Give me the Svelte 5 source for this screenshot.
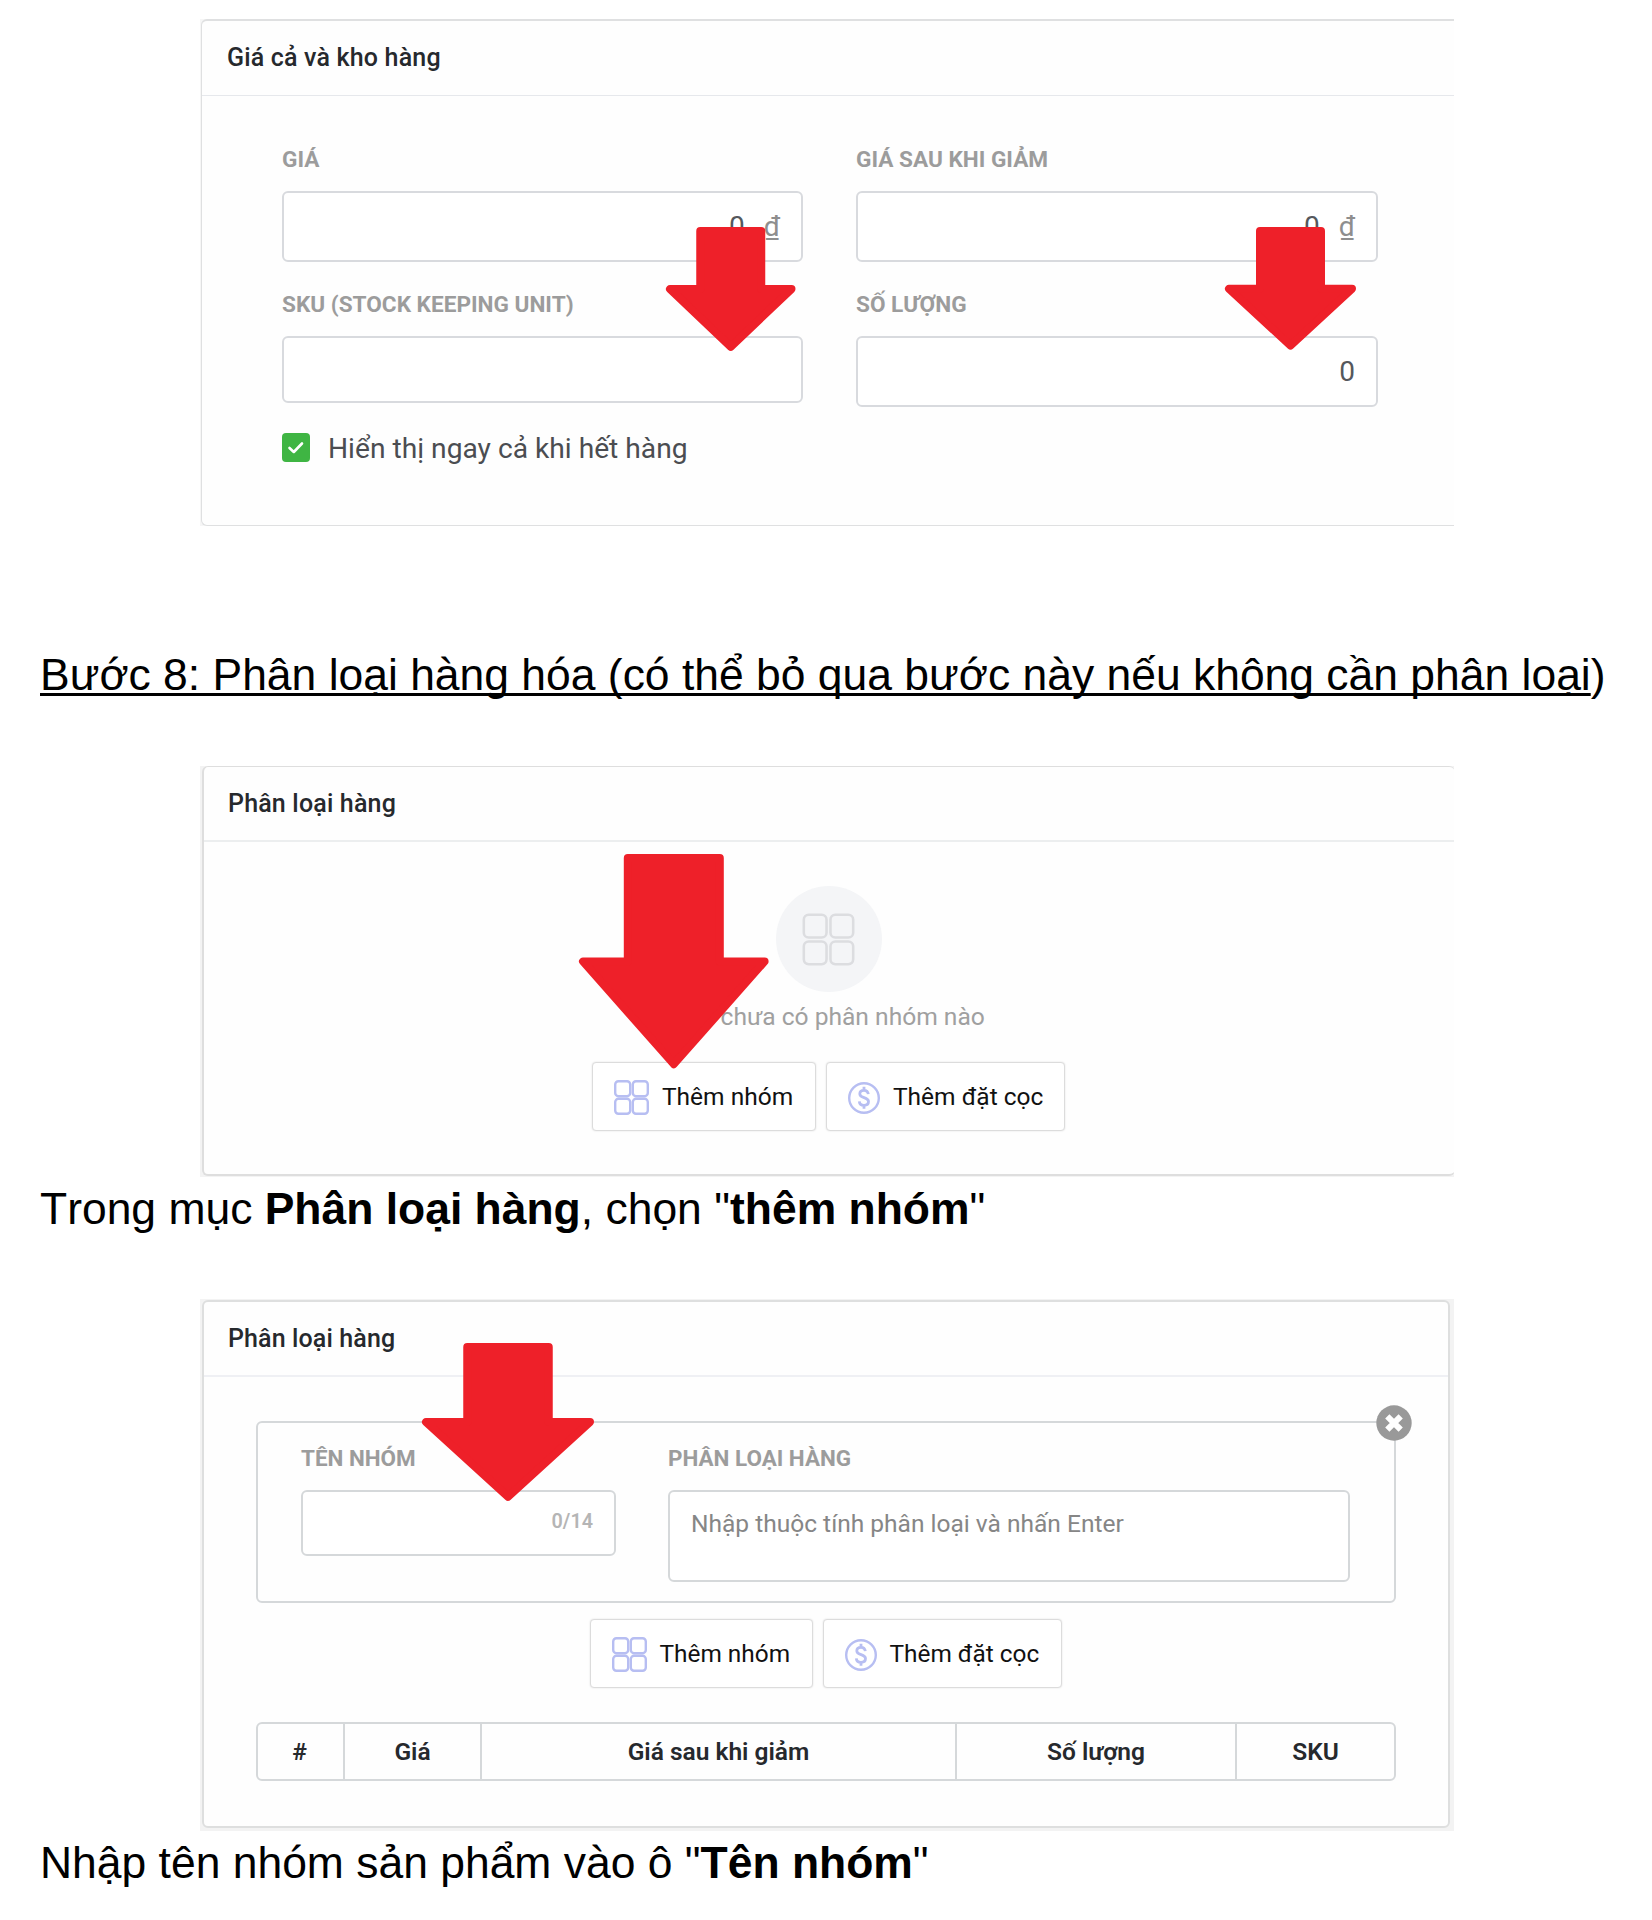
<script>
  // Arrow outlines: box size, shaft width and the depth at which the head begins.
  const arrows = {
    sku: { w: 129.5, h: 123.8, shaft: 69, head: 58 },
    quantity: { w: 131, h: 122.6, shaft: 69, head: 57.8 },
    addGroup: { w: 189.6, h: 214.2, shaft: 100, head: 103.4 },
    groupName: { w: 172, h: 157.8, shaft: 89.5, head: 75 }
  };

  const columns = ['#', 'Giá', 'Giá sau khi giảm', 'Số lượng', 'SKU'];

  // The stroke rounds the corners, so the polygon is inset by its radius.
  function arrowPoints({ w, h, shaft, head }) {
    const r = 4;
    const left = (w - shaft) / 2 + r;
    const right = (w + shaft) / 2 - r;
    return [
      [left, r], [right, r], [right, head + r], [w - r, head + r],
      [w / 2, h - r], [r, head + r], [left, head + r]
    ].map((p) => p.join(',')).join(' ');
  }
</script>

{#snippet arrow(name)}
  <svg class="arrow arrow-{name}" width={arrows[name].w} height={arrows[name].h} aria-hidden="true">
    <polygon points={arrowPoints(arrows[name])} />
  </svg>
{/snippet}

{#snippet gridIcon(kind)}
  <svg class="grid-icon {kind}" viewBox="0 0 35 35" aria-hidden="true">
    <rect x="1.2" y="1.2" width="15" height="15" rx="3.2" />
    <rect x="18.8" y="1.2" width="15" height="15" rx="3.2" />
    <rect x="1.2" y="18.8" width="15" height="15" rx="3.2" />
    <rect x="18.8" y="18.8" width="15" height="15" rx="3.2" />
  </svg>
{/snippet}

{#snippet actions()}
  <div class="actions">
    <button class="action group">
      {@render gridIcon('small')}
      <span>Thêm nhóm</span>
    </button>
    <button class="action deposit">
      <svg class="coin" viewBox="0 0 32 32" aria-hidden="true">
        <circle cx="16" cy="16" r="14.800" />
        <path d="M20.3 12.2C20 9.7 18.300 8.300 16 8.300C13.500 8.300 11.800 9.800 11.800 11.900C11.800 16.600 20.500 14.600 20.500 19.500C20.500 21.900 18.600 23.300 16 23.300C13.300 23.300 11.500 21.800 11.300 19.300M16 4.800V8.300M16 23.300V26.800" />
      </svg>
      <span>Thêm đặt cọc</span>
    </button>
  </div>
{/snippet}

<main>
  <section class="shot pricing">
    <div class="card">
      <h2>Giá cả và kho hàng</h2>
      <div class="fields">
        <div class="field">
          <span class="label">GIÁ</span>
          <div class="input money"><span>0</span><span class="unit">₫</span></div>
        </div>
        <div class="field">
          <span class="label">GIÁ SAU KHI GIẢM</span>
          <div class="input money"><span>0</span><span class="unit">₫</span></div>
        </div>
        <div class="field">
          <span class="label">SKU (STOCK KEEPING UNIT)</span>
          <div class="input short"></div>
        </div>
        <div class="field">
          <span class="label">SỐ LƯỢNG</span>
          <div class="input"><span>0</span></div>
        </div>
      </div>
      <div class="check-row">
        <svg width="28" height="29" viewBox="0 0 28 29" aria-hidden="true">
          <rect width="28" height="29" rx="4" fill="#3fb543" />
          <path d="M7.500 15L11.800 19L20 10.500" fill="none" stroke="#fff" stroke-width="2.600" stroke-linecap="round" stroke-linejoin="round" />
        </svg>
        <span>Hiển thị ngay cả khi hết hàng</span>
      </div>
    </div>
    {@render arrow('sku')}
    {@render arrow('quantity')}
  </section>

  <p class="step"><u>Bước 8: Phân loại hàng hóa (có thể bỏ qua bước này nếu không cần phân loại</u>)</p>

  <section class="shot empty">
    <div class="card">
      <h2>Phân loại hàng</h2>
      <div class="empty-state">
        <div class="disc">{@render gridIcon('large')}</div>
        <span class="hint">Bạn chưa có phân nhóm nào</span>
        {@render actions()}
      </div>
    </div>
    {@render arrow('addGroup')}
  </section>

  <p class="note">Trong mục <b>Phân loại hàng</b>, chọn "<b>thêm nhóm</b>"</p>

  <section class="shot form">
    <div class="card">
      <h2>Phân loại hàng</h2>
      <div class="form-body">
        <div class="panel">
          <div class="field name">
            <span class="label">TÊN NHÓM</span>
            <div class="input counter"><span>0/14</span></div>
          </div>
          <div class="field values">
            <span class="label">PHÂN LOẠI HÀNG</span>
            <div class="input area">Nhập thuộc tính phân loại và nhấn Enter</div>
          </div>
          <svg class="close" viewBox="0 0 36 36" aria-hidden="true">
            <circle cx="18" cy="18" r="17.700" />
            <path d="M11.300 11.300L24.700 24.700M24.700 11.300L11.300 24.700" />
          </svg>
        </div>
        {@render actions()}
        <div class="table">
          {#each columns as column}
            <div class="cell">{column}</div>
          {/each}
        </div>
      </div>
    </div>
    {@render arrow('groupName')}
  </section>

  <p class="note last">Nhập tên nhóm sản phẩm vào ô "<b>Tên nhóm</b>"</p>
</main>

<style>
  :global(body) {
    background: #fff;
  }

  main {
    box-sizing: border-box;
    width: 1652px;
    height: 1920px;
    padding-top: 19px;
    overflow: hidden;
    font-family: Roboto, sans-serif;
    color: #26292d;
  }

  main :global(*) {
    box-sizing: border-box;
  }

  .shot {
    position: relative;
    width: 1254px;
    margin-left: 200px;
  }

  .card {
    display: flex;
    flex-direction: column;
    height: 100%;
    background: #fefefe;
  }

  h2 {
    display: flex;
    align-items: center;
    flex: none;
    margin: 0;
    padding: 0 0 2px 24px;
    font-size: 25px;
    font-weight: 500;
    letter-spacing: 0.18px;
  }

  /* Pricing card */
  .pricing {
    height: 507px;
    overflow: hidden;
    background: #f6f6f6;
  }

  .pricing .card {
    width: 1270px;
    margin-left: 1px;
    border: solid #dfe0e1;
    border-width: 2px 0 1px 1px;
    border-radius: 6px;
  }

  .pricing h2 {
    height: 75px;
    padding-left: 25px;
    border-bottom: 1px solid #e6e8ec;
  }

  .fields {
    display: grid;
    grid-template-columns: 521px 522px;
    column-gap: 53px;
    row-gap: 30px;
    padding: 51px 0 0 80px;
  }

  .field {
    display: flex;
    flex-direction: column;
  }

  .label {
    height: 26px;
    margin-bottom: 18px;
    font-size: 22.600px;
    font-weight: 700;
    line-height: 26px;
    color: #9c9c9c;
    white-space: nowrap;
  }

  .input {
    display: flex;
    align-items: center;
    justify-content: flex-end;
    height: 71px;
    padding-right: 21px;
    border: 2px solid #d8dade;
    border-radius: 6px;
    font-size: 28px;
    color: #55585c;
    background: #fff;
  }

  .short {
    height: 67px;
  }

  .money {
    gap: 19px;
  }

  .unit {
    color: #8e8e8e;
  }

  .check-row {
    display: flex;
    align-items: center;
    gap: 18px;
    height: 30px;
    margin: 26px 0 0 80px;
    font-size: 28.200px;
    color: #4b4d51;
  }

  .check-row svg {
    margin-bottom: 1px;
  }

  /* Document text */
  p {
    height: 60px;
    margin: 0 0 0 40px;
    font-family: 'Liberation Sans', Arial, sans-serif;
    font-size: 44.450px;
    font-kerning: none;
    line-height: 60px;
    color: #000;
    white-space: nowrap;
  }

  .step {
    margin-top: 119px;
    margin-bottom: 61px;
  }

  .step u {
    text-decoration-thickness: 3px;
    text-underline-offset: 3px;
    text-decoration-skip-ink: none;
  }

  .note {
    margin-top: 2px;
    margin-bottom: 60px;
  }

  .last {
    margin-top: 2px;
    margin-bottom: 0;
  }

  /* Empty classification card */
  .empty {
    height: 411px;
    overflow: hidden;
    background: #f3f3f3;
  }

  .empty .card {
    width: 1253px;
    height: 410px;
    margin-left: 2px;
    border: solid #dedede;
    border-width: 1px 0 2px 2px;
    border-radius: 6px;
  }

  .empty h2 {
    height: 75px;
    padding-bottom: 1px;
    border-bottom: 2px solid #eceeef;
  }

  .empty-state {
    display: flex;
    flex-direction: column;
    align-items: center;
    padding: 44px 2px 0 0;
  }

  .disc {
    display: grid;
    place-items: center;
    width: 106px;
    height: 106px;
    border-radius: 50%;
    background: #f4f5f7;
  }

  .hint {
    height: 30px;
    margin: 10px 0 30px;
    font-size: 24.600px;
    line-height: 30px;
    color: #a0a0a0;
  }

  .grid-icon {
    fill: none;
    stroke: #b7bef2;
    stroke-width: 2.400;
  }

  .small {
    width: 35px;
    height: 35px;
  }

  .large {
    width: 53px;
    height: 53px;
    stroke: #dcdde0;
    stroke-width: 1.700;
  }

  .actions {
    display: flex;
    justify-content: center;
    gap: 10px;
  }

  .action {
    display: flex;
    align-items: center;
    gap: 13px;
    height: 69px;
    padding: 0 0 0 21px;
    border: 1px solid #dcdcdc;
    border-radius: 4px;
    background: #fff;
    box-shadow: 0 0 2px rgba(0, 0, 0, 0.12);
    font-family: inherit;
    font-size: 24.500px;
    color: #111;
    white-space: nowrap;
  }

  .action svg {
    margin-top: 2px;
  }

  .group {
    width: 224px;
  }

  .deposit {
    width: 239px;
  }

  .coin {
    width: 32px;
    height: 32px;
    fill: none;
    stroke: #b7bef2;
    stroke-width: 2.400;
  }

  .coin path {
    stroke-width: 2.800;
  }

  /* Classification form card */
  .form {
    height: 532px;
    padding: 1px 4px 3px 2px;
    background: #f3f3f3;
  }

  .form .card {
    border: 2px solid #dedfdf;
    border-radius: 6px;
  }

  .form h2 {
    height: 75px;
    padding-bottom: 1px;
    letter-spacing: 0.12px;
    border-bottom: 2px solid #eff0f4;
  }

  .form-body {
    padding: 44px 52px 0;
  }

  .panel {
    position: relative;
    display: flex;
    gap: 52px;
    height: 182px;
    padding: 22px 0 0 43px;
    border: 2px solid #d5d8da;
    border-radius: 6px;
  }

  .form .label {
    margin-bottom: 19px;
    font-size: 22.450px;
  }

  .form .input {
    border-color: #d5d8da;
  }

  .name {
    width: 315px;
  }

  .values {
    width: 682px;
  }

  .counter {
    height: 66px;
    padding: 0 21px 3px 0;
    font-size: 19.800px;
    font-weight: 600;
    color: #b5b5b5;
  }

  .area {
    align-items: flex-start;
    justify-content: flex-start;
    height: 92px;
    padding: 17px 0 0 21px;
    font-size: 24.520px;
    line-height: 30px;
    color: #868686;
  }

  .close {
    position: absolute;
    top: -18px;
    right: -18px;
    width: 36px;
    height: 36px;
    fill: #999;
  }

  .close path {
    stroke: #fff;
    stroke-width: 6;
  }

  .form .actions {
    margin: 16px 0 34px;
    padding-right: 1px;
  }

  .form .action {
    font-size: 24.400px;
  }

  .form .group {
    width: 223px;
  }

  .table {
    display: grid;
    grid-template-columns: 87px 137px 475px 280px 1fr;
    height: 59px;
    border: 2px solid #d5d8da;
    border-radius: 6px;
  }

  .cell {
    display: grid;
    place-items: center;
    border-right: 2px solid #d5d8da;
    font-size: 24.500px;
    font-weight: 600;
  }

  .cell:first-child {
    padding-right: 2px;
  }

  .cell:last-child {
    border-right: 0;
  }

  /* Arrows drawn over the cards */
  .arrow {
    position: absolute;
    overflow: visible;
    fill: #ee2029;
    stroke: #ee2029;
    stroke-width: 8;
    stroke-linejoin: round;
  }

  .arrow-sku {
    left: 466px;
    top: 207.500px;
  }

  .arrow-quantity {
    left: 1024.500px;
    top: 207.500px;
  }

  .arrow-addGroup {
    left: 378.600px;
    top: 88px;
  }

  .arrow-groupName {
    left: 222.300px;
    top: 43.500px;
  }
</style>
